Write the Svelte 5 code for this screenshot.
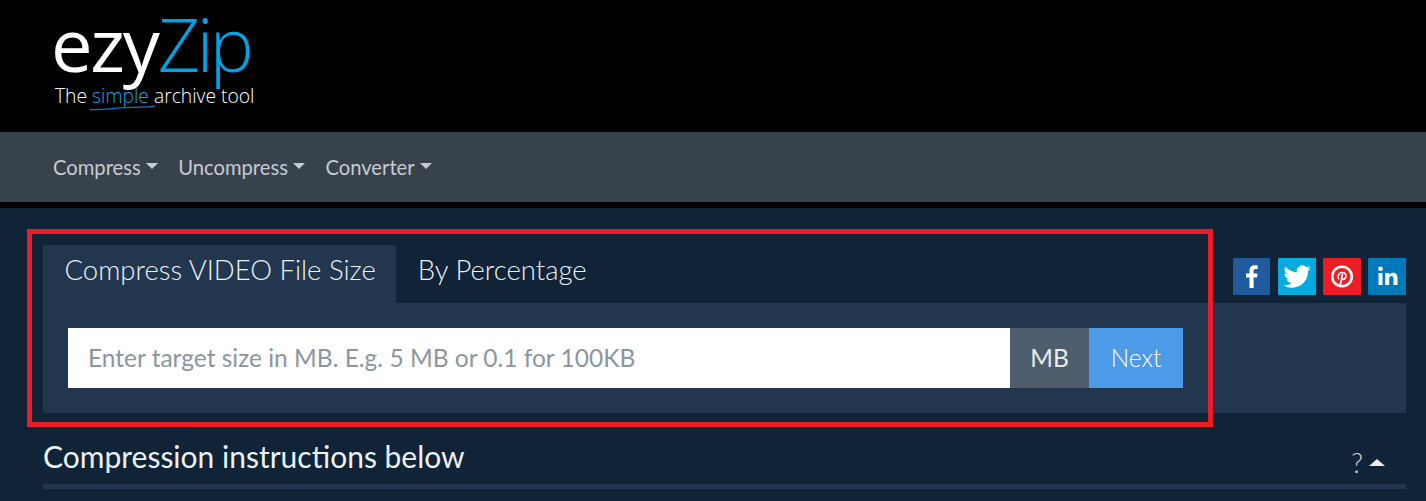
<script>
  const navItems = ['Compress', 'Uncompress', 'Converter'];
</script>

<div class="page">
  <header class="brand">
    <div class="logo">
      <div class="wordmark"><span class="ezy">ezy</span><span class="zip">Zip</span></div>
      <div class="tagline">The <span class="simple">simple</span> archive tool</div>
      <svg class="swoosh" width="68" height="6" viewBox="0 0 68 6"><path d="M1 4.6C18 5 24 3 36 2.6C46 2.2 56 2.6 66 1.2" fill="none" stroke="#0a74c9" stroke-width="1.3" stroke-linecap="round"/></svg>
    </div>
  </header>
  <nav class="nav">
    {#each navItems as item}
      <a class="nav-item" href="#top">{item}<span class="caret"></span></a>
    {/each}
  </nav>
  <main class="main">
    <div class="top-row">
      <section class="tool">
        <div class="tabs">
          <div class="tab active">Compress VIDEO File Size</div>
          <div class="tab">By Percentage</div>
        </div>
      </section>
      <div class="social">
        <span class="soc fb"><svg width="37" height="37" viewBox="0 0 37 37"><path fill="#fff" d="M20.6 30v-10.400h3.500l.5-4h-4v-2.500c0-1.200.4-2 2-2h2.100V7.500c-.4 0-1.600-.2-3.100-.2-3.100 0-5.100 1.800-5.100 5.200v3.100h-3.500v4h3.500V30z"/></svg></span>
        <span class="soc tw"><svg width="38" height="37" viewBox="0 0 24 24"><g transform="translate(3.2 3.200) scale(.74)"><path fill="#fff" d="M23.950 4.570a10 10 0 0 1-2.820.77 4.960 4.960 0 0 0 2.160-2.720c-.95.550-2 .96-3.130 1.190a4.920 4.920 0 0 0-8.380 4.480C7.690 8.090 4.070 6.130 1.640 3.160a4.820 4.820 0 0 0-.67 2.470c0 1.710.87 3.210 2.190 4.100a4.900 4.900 0 0 1-2.230-.62v.06a4.920 4.920 0 0 0 3.950 4.830 5 5 0 0 1-2.210.08 4.940 4.940 0 0 0 4.600 3.420A9.870 9.870 0 0 1 0 19.540a14 14 0 0 0 7.560 2.210c9.050 0 14-7.500 14-13.980 0-.21 0-.42-.02-.63a9.940 9.940 0 0 0 2.410-2.550z"/></g></svg></span>
        <span class="soc pi"><svg width="38" height="37" viewBox="0 0 38 37"><circle cx="19" cy="18.500" r="9.800" fill="none" stroke="#fff" stroke-width="2.600"/><path fill="none" stroke="#fff" stroke-width="1.700" stroke-linecap="round" d="M15.500 20.500c-1.200-2.800.6-6 3.800-6 2.800 0 4.100 2 3.500 4.400-.5 2.100-2.600 3.200-4 1.800M19.400 16.500l-2.100 10.500"/></svg></span>
        <span class="soc li"><svg width="38" height="37" viewBox="0 0 38 37"><circle cx="12.500" cy="10.800" r="2.300" fill="#fff"/><rect x="10.500" y="15" width="4" height="12" fill="#fff"/><path fill="#fff" d="M17.200 15h3.800v1.700c.7-1.200 2-2 3.800-2 3.300 0 4.700 2 4.700 5.300v7h-4v-6.300c0-1.700-.6-2.700-2-2.700-1.500 0-2.300 1-2.300 2.700v6.300h-4z"/></svg></span>
      </div>
    </div>
    <div class="panel">
      <div class="input-group">
        <div class="field">Enter target size in MB. E.g. 5 MB or 0.1 for 100KB</div>
        <div class="unit">MB</div>
        <div class="next">Next</div>
      </div>
    </div>
    <div class="instructions">
      <h2>Compression instructions below</h2>
      <div class="help">?<span class="up"></span></div>
    </div>
    <div class="rule"></div>
    <div class="highlight"></div>
  </main>
</div>

<style>
  :global(body) {
    margin: 0;
    background: #102337;
    overflow: hidden;
  }
  .page {
    width: 1426px;
    height: 501px;
    overflow: hidden;
    font-family: Lato, "Liberation Sans", sans-serif;
  }
  .brand {
    height: 132px;
    background: #000;
    box-sizing: border-box;
    padding: 2px 0 0 51px;
  }
  .logo {
    position: relative;
    width: 215px;
  }
  .wordmark {
    font-family: "Open Sans", sans-serif;
    font-weight: 300;
    font-size: 74px;
    line-height: 84px;
    white-space: nowrap;
  }
  .ezy {
    color: #fff;
    font-weight: 400;
    letter-spacing: -2.200px;
  }
  .zip {
    color: #00a2e6;
    letter-spacing: -3.600px;
  }
  .tagline {
    font-family: "Open Sans", sans-serif;
    font-weight: 300;
    font-size: 19.300px;
    line-height: 22px;
    margin: -1px 0 0 4px;
    color: #fff;
    white-space: nowrap;
  }
  .simple {
    color: #1ea0e0;
  }
  .swoosh {
    position: absolute;
    left: 38px;
    top: 103px;
  }
  .nav {
    height: 70px;
    background: #38424c;
    display: flex;
    align-items: center;
    gap: 20.500px;
    padding-left: 53px;
    border-bottom: 6px solid #000;
  }
  .nav-item {
    color: #c5cbd1;
    font-size: 20.200px;
    line-height: 24px;
    text-decoration: none;
    display: flex;
    align-items: center;
  }
  .caret {
    margin: -3px 0 0 5px;
    border-top: 6px solid #c5cbd1;
    border-left: 6px solid transparent;
    border-right: 6px solid transparent;
  }
  .main {
    position: relative;
    background: #102337;
    height: 293px;
    padding: 37px 20px 0 43px;
    box-sizing: border-box;
  }
  .top-row {
    display: flex;
    justify-content: space-between;
    align-items: flex-start;
    height: 58px;
  }
  .tabs {
    display: flex;
  }
  .tab {
    height: 58px;
    line-height: 50px;
    box-sizing: border-box;
    padding: 0 21.500px;
    font-size: 27.500px;
    font-weight: 300;
    color: #eaf1f5;
    white-space: nowrap;
  }
  .tab.active {
    background: #22374d;
    padding-right: 20.500px;
  }
  .social {
    display: flex;
    gap: 7px;
    margin-top: 13px;
  }
  .soc {
    display: block;
    height: 37px;
    width: 38px;
    border-radius: 1px;
  }
  .soc svg {
    display: block;
  }
  .fb {
    width: 37px;
    margin-right: 1px;
    background: #1f5b9d;
  }
  .tw {
    background: #00acdf;
  }
  .pi {
    background: #ee1c25;
  }
  .li {
    background: #0079b8;
  }
  .panel {
    background: #22374d;
    height: 110px;
    box-sizing: border-box;
    padding: 25px;
  }
  .input-group {
    display: flex;
    height: 60px;
    width: 1115px;
    font-size: 24.500px;
    line-height: 60px;
  }
  .field {
    flex: 1;
    background: #fff;
    color: #8d96a0;
    padding-left: 20px;
  }
  .unit {
    width: 79px;
    background: #4e5d6c;
    color: #ebebeb;
    text-align: center;
  }
  .next {
    width: 94px;
    background: #4d9be8;
    color: #fff;
    text-align: center;
    font-weight: 300;
  }
  .instructions {
    display: flex;
    justify-content: space-between;
    align-items: center;
    height: 71px;
    padding-top: 14px;
    box-sizing: border-box;
  }
  h2 {
    margin: 0;
    font-size: 30px;
    font-weight: 400;
    color: #ebf1f4;
  }
  .help {
    display: flex;
    align-items: center;
    color: #d0d6db;
    font-size: 27px;
    font-weight: 300;
    margin: 14px 21px 0 0;
  }
  .up {
    margin-left: 6px;
    border-bottom: 7.500px solid #ebebeb;
    border-left: 8px solid transparent;
    border-right: 8px solid transparent;
  }
  .rule {
    height: 5px;
    background: #22374d;
  }
  .highlight {
    position: absolute;
    left: 27px;
    top: 21px;
    width: 1186px;
    height: 198px;
    box-sizing: border-box;
    border: 5px solid #ee1c25;
    pointer-events: none;
  }
</style>
